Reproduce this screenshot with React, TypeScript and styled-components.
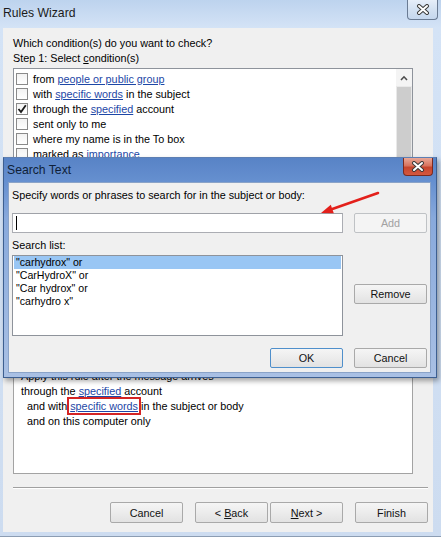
import React from "react";
import styled, { createGlobalStyle } from "styled-components";

const GlobalStyle = createGlobalStyle`
  html, body {
    margin: 0;
    padding: 0;
    background: #ffffff;
  }
  body {
    font-family: "Liberation Sans", "Noto Sans", sans-serif;
    font-size: 10.8px;
    color: #000;
  }
`;

const Window = styled.div`
  position: relative;
  width: 441px;
  height: 537px;
  box-sizing: border-box;
  padding: 0 8px 4px 3px;
  display: flex;
  flex-direction: column;
  overflow: hidden;
  background: linear-gradient(180deg, #bdd3ee 0%, #d4e3f6 28px, #cddcf0 100%);
  border-bottom: 1px solid #8c9db3;
`;

const TitleBar = styled.div`
  height: 28px;
  flex: none;
  display: flex;
  align-items: flex-start;
`;

const Title = styled.div`
  align-self: center;
  margin-top: -2px;
  font-size: 12.2px;
  color: #1b1b1b;
`;

const CloseButton = styled.div<{ $danger?: boolean }>`
  margin-left: auto;
  width: ${(p) => (p.$danger ? 30 : 31)}px;
  height: ${(p) => (p.$danger ? 18 : 20)}px;
  margin-right: ${(p) => (p.$danger ? 3 : -5)}px;
  box-sizing: border-box;
  display: flex;
  align-items: center;
  justify-content: center;
  border: 1px solid ${(p) => (p.$danger ? "#7b2a1f" : "#6a7b93")};
  border-top: none;
  border-radius: 0 0 4px 4px;
  background: ${(p) =>
    p.$danger
      ? "linear-gradient(180deg, #e9a897 0%, #d8735e 45%, #c7452d 55%, #d4583f 100%)"
      : "linear-gradient(180deg, #e6eef9 0%, #d3e1f2 50%, #c5d7ee 100%)"};
`;

const Client = styled.div`
  flex: 1;
  background: #f0f0f0;
  padding: 8px 5px 0 10px;
  display: flex;
  flex-direction: column;
`;

const Label = styled.div<{ $top?: number }>`
  margin-top: ${(p) => p.$top ?? 0}px;
  line-height: 15px;
  white-space: nowrap;
`;

const CondList = styled.div`
  margin-top: 2px;
  width: 400px;
  height: 277px;
  box-sizing: border-box;
  border: 1px solid #8e939b;
  background: #fff;
  display: flex;
`;

const CondItems = styled.div`
  flex: 1;
  padding: 2px 0 0 2px;
  overflow: hidden;
`;

const CondRow = styled.div`
  height: 15px;
  display: flex;
  align-items: center;
  gap: 5px;
  white-space: nowrap;
`;

const CheckBox = styled.span`
  width: 12px;
  height: 12px;
  flex: none;
  box-sizing: border-box;
  border: 1px solid #8a8a8a;
  background: linear-gradient(180deg, #f2f2f2, #ffffff);
  display: flex;
  align-items: center;
  justify-content: center;
`;

const Link = styled.span`
  color: #1d47a6;
  text-decoration: underline;
`;

const Marked = styled(Link)`
  outline: 2px solid #d42424;
  outline-offset: 1px;
`;

const ScrollBar = styled.div`
  width: 16px;
  flex: none;
  background: #e9e9e9;
  display: flex;
  flex-direction: column;
`;

const ScrollArrow = styled.div`
  height: 17px;
  display: flex;
  align-items: center;
  justify-content: center;
  background: #f4f4f4;
`;

const ScrollThumb = styled.div`
  flex: 1;
  margin: 1px 1px 0;
  background: #cdcdcd;
`;

const Spacer = styled.div`
  height: 17px;
`;

const DescBox = styled.div`
  margin-top: 3px;
  width: 400px;
  height: 109px;
  box-sizing: border-box;
  border: 1px solid #a3a3a3;
  background: #fff;
  padding: 3px 0 0 7px;
`;

const DescLine = styled.div<{ $indent?: boolean }>`
  line-height: 15px;
  padding-left: ${(p) => (p.$indent ? 6 : 0)}px;
  white-space: nowrap;
`;

const Separator = styled.div`
  margin-top: 13px;
  width: 415px;
  border-top: 1px solid #a0a0a0;
  border-bottom: 1px solid #ffffff;
`;

const ButtonRow = styled.div<{ $top: number; $width?: number }>`
  margin-top: ${(p) => p.$top}px;
  width: ${(p) => (p.$width ? `${p.$width}px` : "auto")};
  display: flex;
  justify-content: flex-end;
`;

const Button = styled.div<{ $gap?: number; $primary?: boolean; $disabled?: boolean; $h?: number }>`
  width: 73px;
  height: ${(p) => p.$h ?? 21}px;
  margin-left: ${(p) => p.$gap ?? 0}px;
  box-sizing: border-box;
  display: flex;
  align-items: center;
  justify-content: center;
  border: 1px solid ${(p) => (p.$primary ? "#4f8fcb" : p.$disabled ? "#bfc2c5" : "#a9a9a9")};
  border-radius: 2px;
  background: ${(p) =>
    p.$disabled ? "#f4f4f4" : "linear-gradient(180deg, #f5f5f5 0%, #ececec 50%, #e2e2e2 100%)"};
  color: ${(p) => (p.$disabled ? "#a2a2a2" : "#111")};
  white-space: pre;
`;

const Dialog = styled.div`
  position: absolute;
  left: 3px;
  top: 157px;
  width: 434px;
  height: 221px;
  box-sizing: border-box;
  border: 1px solid #3d5f91;
  border-top-color: #5d7fb3;
  display: flex;
  flex-direction: column;
  background: linear-gradient(180deg, #5883c6 0%, #6690d0 24px, #88a9dc 60px, #a9c0e4 100%);
  box-shadow: 2px 3px 5px rgba(0, 0, 0, 0.35);
`;

const DialogTitleBar = styled.div`
  height: 24px;
  flex: none;
  display: flex;
  align-items: flex-start;
`;

const DialogTitle = styled.div`
  align-self: center;
  padding-left: 3px;
  font-size: 12.2px;
  color: #0f1f38;
`;

const DialogClient = styled.div`
  margin: 0 5px 4px 4px;
  flex: 1;
  box-sizing: border-box;
  border: 1px solid #8aa3c8;
  background: #f0f0f0;
  padding: 5px 3px 4px 3px;
  display: flex;
  flex-direction: column;
`;

const DialogRow = styled.div<{ $top: number }>`
  margin-top: ${(p) => p.$top}px;
  display: flex;
  align-items: flex-start;
  gap: 11px;
`;

const TextInput = styled.div`
  width: 331px;
  height: 20px;
  box-sizing: border-box;
  border: 1px solid #abadb3;
  border-top-color: #9fa2a8;
  background: #fff;
  padding: 2px 0 0 3px;
`;

const Caret = styled.div`
  width: 1px;
  height: 14px;
  background: #000;
`;

const SearchList = styled.div`
  width: 331px;
  height: 81px;
  box-sizing: border-box;
  border: 1px solid #8e939b;
  background: #fff;
`;

const SearchItem = styled.div<{ $selected?: boolean }>`
  height: 13px;
  line-height: 13px;
  margin: 0 1px;
  padding-left: 2px;
  font-size: 10.6px;
  white-space: nowrap;
  overflow: hidden;
  background: ${(p) => (p.$selected ? "#99c6f4" : "transparent")};
`;

const SideColumn = styled.div`
  padding-top: 29px;
`;

const Arrow = styled.svg`
  position: absolute;
  left: 0;
  top: 0;
  pointer-events: none;
`;

const Underline = styled.span`
  text-decoration: underline;
`;

// only the rows that show above the Search Text dialog
const conditions: Array<[string, string, string, boolean?]> = [
  ["from ", "people or public group", ""],
  ["with ", "specific words", " in the subject"],
  ["through the ", "specified", " account", true],
  ["sent only to me", "", ""],
  ["where my name is in the To box", "", ""],
  ["marked as ", "importance", ""],
];

const searchTerms = ['"carhydrox" or', '"CarHydroX" or', '"Car hydrox" or', '"carhydro x"'];

const CloseGlyph = () => (
  <svg width="14" height="11" viewBox="0 0 14 11">
    <path d="M3 2 L11 9 M11 2 L3 9" stroke="#3a3a3a" strokeWidth="4" strokeLinecap="round" />
    <path d="M3 2 L11 9 M11 2 L3 9" stroke="#ffffff" strokeWidth="2" strokeLinecap="round" />
  </svg>
);

const App = () => {
  return (
    <>
      <GlobalStyle />
      <Window>
        <TitleBar>
          <Title>Rules Wizard</Title>
          <CloseButton>
            <CloseGlyph />
          </CloseButton>
        </TitleBar>
        <Client>
          <Label>Which condition(s) do you want to check?</Label>
          <Label>
            Step 1: Select <Underline>c</Underline>ondition(s)
          </Label>
          <CondList>
            <CondItems>
              {conditions.map(([pre, link, post, checked], i) => (
                <CondRow key={i}>
                  <CheckBox>
                    {checked && (
                      <svg width="10" height="10" viewBox="0 0 10 10">
                        <path d="M1.5 5 L4 8 L8.8 1.2" fill="none" stroke="#1a1a1a" strokeWidth="1.8" />
                      </svg>
                    )}
                  </CheckBox>
                  <span>
                    {pre}
                    {link && <Link>{link}</Link>}
                    {post}
                  </span>
                </CondRow>
              ))}
            </CondItems>
            <ScrollBar>
              <ScrollArrow>
                <svg width="8" height="6" viewBox="0 0 8 6">
                  <path d="M1 5 L4 1.8 L7 5" fill="none" stroke="#4d4d4d" strokeWidth="1.6" />
                </svg>
              </ScrollArrow>
              <ScrollThumb />
            </ScrollBar>
          </CondList>
          <Spacer />
          <DescBox>
            <DescLine>Apply this rule after the message arrives</DescLine>
            <DescLine>
              through the <Link>specified</Link> account
            </DescLine>
            <DescLine $indent>
              and with <Marked>specific words</Marked> in the subject or body
            </DescLine>
            <DescLine $indent>and on this computer only</DescLine>
          </DescBox>
          <Separator />
          <ButtonRow $top={13} $width={415}>
            <Button>Cancel</Button>
            <Button $gap={12}>
              <span>
                {"< "}
                <Underline>B</Underline>ack
              </span>
            </Button>
            <Button $gap={2}>
              <span>
                <Underline>N</Underline>
                {"ext >"}
              </span>
            </Button>
            <Button $gap={12}>Finish</Button>
          </ButtonRow>
        </Client>

        <Dialog>
          <DialogTitleBar>
            <DialogTitle>Search Text</DialogTitle>
            <CloseButton $danger>
              <CloseGlyph />
            </CloseButton>
          </DialogTitleBar>
          <DialogClient>
            <Label>Specify words or phrases to search for in the subject or body:</Label>
            <DialogRow $top={10}>
              <TextInput>
                <Caret />
              </TextInput>
              <Button $disabled $h={20}>
                Add
              </Button>
            </DialogRow>
            <Label $top={5}>Search list:</Label>
            <DialogRow $top={2}>
              <SearchList>
                {searchTerms.map((t, i) => (
                  <SearchItem key={t} $selected={i === 0}>
                    {t}
                  </SearchItem>
                ))}
              </SearchList>
              <SideColumn>
                <Button $h={20}>Remove</Button>
              </SideColumn>
            </DialogRow>
            <ButtonRow $top={12}>
              <Button $primary $h={20}>
                OK
              </Button>
              <Button $gap={11} $h={20}>
                Cancel
              </Button>
            </ButtonRow>
          </DialogClient>
        </Dialog>

        <Arrow width="441" height="537" viewBox="0 0 441 537">
          <path d="M378 193 L332.3 209" stroke="#e3201b" strokeWidth="2.6" strokeLinecap="round" />
          <path d="M321 213 L333.8 213.2 L330.8 204.7 Z" fill="#e3201b" />
        </Arrow>
      </Window>
    </>
  );
};

export default App;
